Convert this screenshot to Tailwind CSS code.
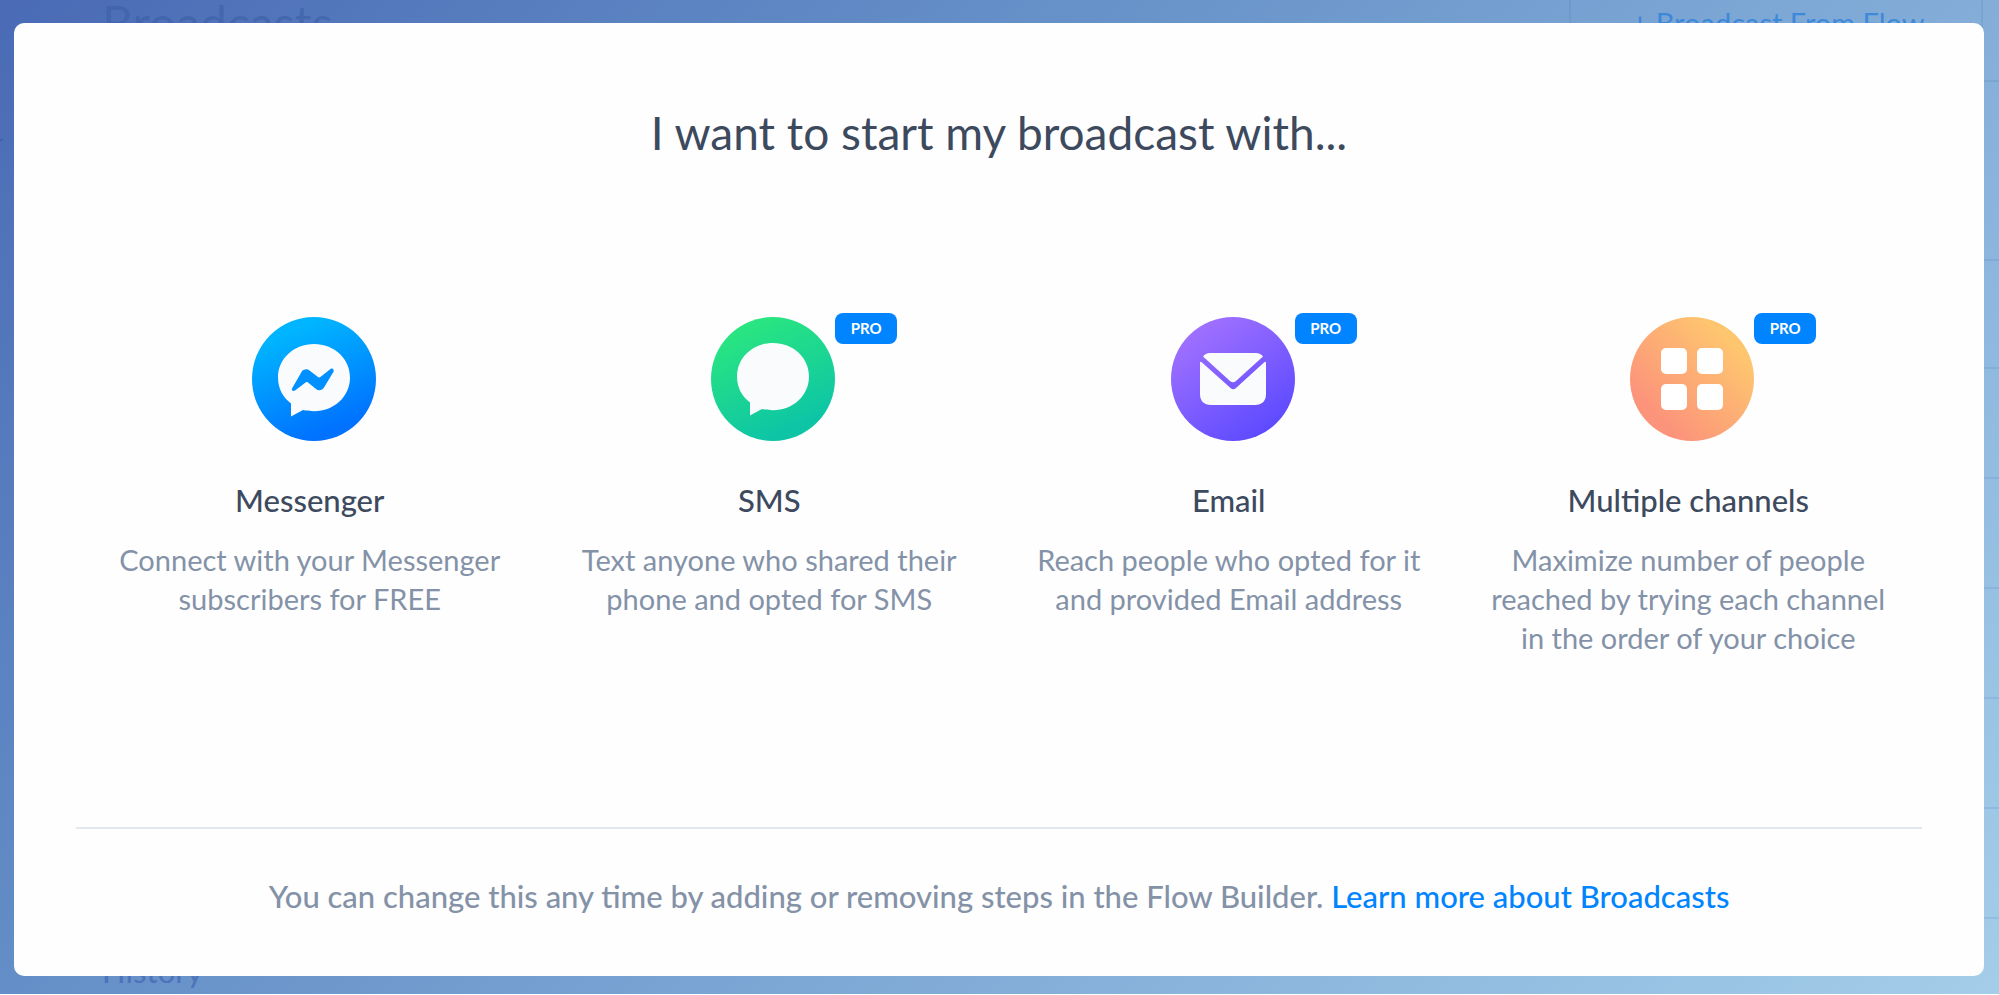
<!DOCTYPE html>
<html lang="en">
<head>
    <meta charset="UTF-8">
    <meta name="viewport" content="width=device-width, initial-scale=1.0">
    <title>New Broadcast</title>
    <script src="https://cdn.jsdelivr.net/npm/@tailwindcss/browser@4"></script>
</head>
<body class="bg-white font-['Lato',sans-serif]">

    <div class="relative h-[calc(100vh-1px)] overflow-hidden bg-[linear-gradient(135deg,#4a6ab5,#6590c8_35%,#a4cde9)]">

        <!-- Page behind the dialog -->
        <div class="absolute inset-0 overflow-hidden pl-[102px]" aria-hidden="true">
            <div class="flex h-[82px] border-b-2 border-[#4070b0]/15">
                <div class="flex-1 text-[48px] leading-[46px] text-[#3c5fa8]/60">Broadcasts</div>
                <div class="w-[414px] border-x-2 border-[#4070b0]/15 pl-1 text-center text-[29px] leading-[46px] text-[#2b80dc]/80">+ Broadcast From Flow</div>
                <div class="w-4"></div>
            </div>
            <div class="h-[179px] border-b-2 border-[#4070b0]/15"></div>
            <div class="h-[108px] border-b-2 border-[#4070b0]/15"></div>
            <div class="h-[110px] border-b-2 border-[#4070b0]/15"></div>
            <div class="h-[110px] border-b-2 border-[#4070b0]/15"></div>
            <div class="h-[110px] border-b-2 border-[#4070b0]/15"></div>
            <div class="h-[110px] border-b-2 border-[#4070b0]/15"></div>
            <div class="h-[110px] border-b-2 border-[#4070b0]/15"></div>
            <div class="pt-8 text-[31px] leading-10 font-medium text-[#3c5fb0]/60">History</div>
        </div>
        <svg class="absolute top-[138px] left-0 h-1 w-1" viewBox="0 0 4 4"><path d="M0 3 3 1" stroke="#3c5fa8" stroke-width="1.5"/></svg>

        <!-- Dialog -->
        <div class="relative flex h-full pt-[23px] pr-[15px] pb-[18px] pl-[14px]">
            <main role="dialog" aria-labelledby="dialogTitle" class="flex flex-1 flex-col rounded-[10px] bg-[#fefefe] px-[62px]">
                <h1 id="dialogTitle" class="pt-20 text-center text-[46px] leading-[60px] text-[#3d4a5e]">I want to start my broadcast with...</h1>

                <div class="mt-[154px] grid grid-cols-4 px-1">
                    <button class="flex flex-col items-center">
                        <span class="relative ml-2">
                            <svg class="h-[124px] w-[124px]" viewBox="0 0 124 124">
                                <defs>
                                    <linearGradient id="messenger" x1="0.3" y1="0" x2="0.7" y2="1">
                                        <stop offset="0.1" stop-color="#00b5ff"/>
                                        <stop offset="0.9" stop-color="#0072ff"/>
                                    </linearGradient>
                                </defs>
                                <circle cx="62" cy="62" r="62" fill="url(#messenger)"/>
                                <path d="M62 27c-20 0-36 14.500-36 33.500 0 11 5 20 13 26V99.500l12-6.500c3.500.8 7 1.200 11 1.200 20 0 36-14.500 36-33.700S82 27 62 27z" fill="#fafbfd"/>
                                <path d="M40 71.500 49.500 55c1.500-2.800 5.500-3.600 8-1.500l8.500 6.500c.8.600 1.600.600 2.400 0L78.500 52c1.800-1.400 4 .6 3 2.700L72 70.500c-1.800 3-5.500 3.600-8 1.600L56 65.500c-.8-.6-1.700-.6-2.400 0L43 73.600c-1.800 1.200-4-.3-3-2.100z" fill="#0090ff"/>
                            </svg>
                        </span>
                        <span class="mt-[39px] text-[31px] leading-10 font-medium text-[#3d4a5e]">Messenger</span>
                        <span class="mt-5 text-[29px] leading-[39px] text-[#8492a8]">Connect with your Messenger<br>subscribers for FREE</span>
                    </button>

                    <button class="flex flex-col items-center">
                        <span class="relative ml-2">
                            <svg class="h-[124px] w-[124px]" viewBox="0 0 124 124">
                                <defs>
                                    <linearGradient id="sms" x1="0.25" y1="0" x2="0.7" y2="1">
                                        <stop offset="0.05" stop-color="#2ae67f"/>
                                        <stop offset="0.9" stop-color="#0dc5a5"/>
                                    </linearGradient>
                                </defs>
                                <circle cx="62" cy="62" r="62" fill="url(#sms)"/>
                                <path d="M62 26c-20 0-36 14.500-36 33.500 0 11 5 20 13 26V98.500l12-6.500c3.500.8 7 1.200 11 1.200 20 0 36-14.500 36-33.700S82 26 62 26z" fill="#fafbfd"/>
                            </svg>
                            <span class="absolute -top-1 left-full w-[62px] rounded-lg bg-[#0084ff] text-center text-[15px] leading-[31px] font-bold text-white">PRO</span>
                        </span>
                        <span class="mt-[39px] text-[31px] leading-10 font-medium text-[#3d4a5e]">SMS</span>
                        <span class="mt-5 text-[29px] leading-[39px] text-[#8492a8]">Text anyone who shared their<br>phone and opted for SMS</span>
                    </button>

                    <button class="flex flex-col items-center">
                        <span class="relative ml-2">
                            <svg class="h-[124px] w-[124px]" viewBox="0 0 124 124">
                                <defs>
                                    <linearGradient id="email" x1="0.2" y1="0.1" x2="0.8" y2="0.95">
                                        <stop offset="0" stop-color="#9f70ff"/>
                                        <stop offset="1" stop-color="#5b49ff"/>
                                    </linearGradient>
                                </defs>
                                <circle cx="62" cy="62" r="62" fill="url(#email)"/>
                                <path d="M32 39.500c1.500-2 4-3.500 7-3.500h46c3 0 5.500 1.500 7 3.500L65 64c-2 1.800-4 1.800-6 0z" fill="#fafbfd"/>
                                <path d="M29 46.500c0-2 .8-2 2-1L59.500 71c2 1.700 3.500 1.700 5.500 0L93 45.500c1.200-1 2-1 2 1V77c0 7-4 11-11 11H40c-7 0-11-4-11-11z" fill="#fafbfd"/>
                            </svg>
                            <span class="absolute -top-1 left-full w-[62px] rounded-lg bg-[#0084ff] text-center text-[15px] leading-[31px] font-bold text-white">PRO</span>
                        </span>
                        <span class="mt-[39px] text-[31px] leading-10 font-medium text-[#3d4a5e]">Email</span>
                        <span class="mt-5 text-[29px] leading-[39px] text-[#8492a8]">Reach people who opted for it<br>and provided Email address</span>
                    </button>

                    <button class="flex flex-col items-center">
                        <span class="relative ml-2">
                            <svg class="h-[124px] w-[124px]" viewBox="0 0 124 124">
                                <defs>
                                    <linearGradient id="multiple" x1="0.8" y1="0.2" x2="0.2" y2="0.8">
                                        <stop offset="0" stop-color="#fec56f"/>
                                        <stop offset="1" stop-color="#fc937b"/>
                                    </linearGradient>
                                </defs>
                                <circle cx="62" cy="62" r="62" fill="url(#multiple)"/>
                                <g fill="#fff">
                                    <rect x="31" y="31" width="26" height="26" rx="5"/>
                                    <rect x="67" y="31" width="26" height="26" rx="5"/>
                                    <rect x="31" y="67" width="26" height="26" rx="5"/>
                                    <rect x="67" y="67" width="26" height="26" rx="5"/>
                                </g>
                            </svg>
                            <span class="absolute -top-1 left-full w-[62px] rounded-lg bg-[#0084ff] text-center text-[15px] leading-[31px] font-bold text-white">PRO</span>
                        </span>
                        <span class="mt-[39px] text-[31px] leading-10 font-medium text-[#3d4a5e]">Multiple channels</span>
                        <span class="mt-5 text-[29px] leading-[39px] text-[#8492a8]">Maximize number of people<br>reached by trying each channel<br>in the order of your choice</span>
                    </button>
                </div>

                <!-- Footer -->
                <footer class="mt-auto border-t-2 border-[#e3e7ee] pt-[47px] pb-[60px] text-center text-[31px] leading-10 font-medium text-[#8492a8]">
                    You can change this any time by adding or removing steps in the Flow Builder.
                    <a href="#" class="text-[#0084ff]">Learn more about Broadcasts</a>
                </footer>
            </main>
        </div>
    </div>

</body>
</html>
